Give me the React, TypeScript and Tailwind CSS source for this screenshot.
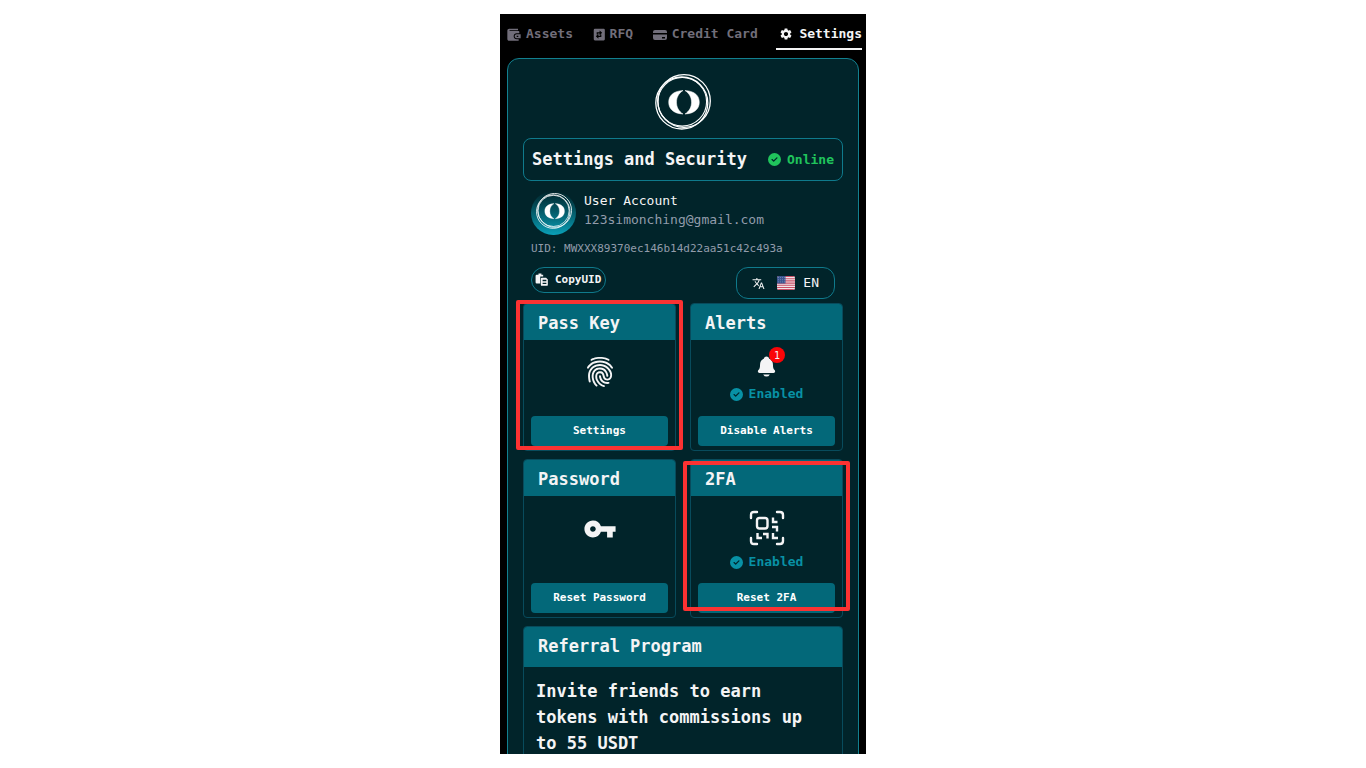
import type { ReactNode } from "react";
import { FaCircleCheck } from "react-icons/fa6";
import { IoFingerPrint, IoNotifications } from "react-icons/io5";
import { MdSettings, MdVpnKey, MdTranslate } from "react-icons/md";

function Rings({ className }: { className: string }) {
  return (
    <svg viewBox="0 0 56 56" className={className} fill="none" stroke="currentColor" aria-hidden="true">
      <circle cx="29" cy="27" r="26.300" strokeWidth="1.300" />
      <circle cx="26.800" cy="29" r="26" strokeWidth="1.300" />
      <circle cx="27.300" cy="27.800" r="24.300" strokeWidth="1.100" />
      <path d="M28 16.500C18 17 13.700 22 13.700 28.200C13.700 34.500 18 39.500 28 40C23.500 37 21.500 33 21.500 28.200C21.500 23.500 23.500 19.500 28 16.500Z" fill="currentColor" strokeWidth=".5" />
      <path d="M30 16.500C40 17 44.300 22 44.300 28.200C44.300 34.500 40 39.500 30 40C34.500 37 36.500 33 36.500 28.200C36.500 23.500 34.500 19.500 30 16.500Z" fill="currentColor" strokeWidth=".5" />
    </svg>
  );
}

function WalletIcon() {
  return (
    <svg viewBox="0 0 24 24" className="size-4" fill="currentColor" aria-hidden="true">
      <path d="M5 4H18V6.500H6C5 6.500 5 7.500 6 7.500H19Q20 7.500 20 9V11H16C13.500 11 11.500 12.500 11.500 15.500C11.500 18.500 13.500 20 16 20H19V22H5C3 22 2 21 2 19V7C2 5 3 4 5 4Z" />
      <path fillRule="evenodd" d="M16 12.500H22V18.500H16C14.500 18.500 13 17.200 13 15.500C13 13.800 14.500 12.500 16 12.500ZM16 14.500V16.500H18.500V14.500Z" />
    </svg>
  );
}

function SwapIcon() {
  return (
    <svg viewBox="0 0 24 24" className="size-[14px]" fill="currentColor" aria-hidden="true">
      <path fillRule="evenodd" d="M5 3H20Q22 3 22 5V21Q22 23 20 23H5Q3 23 3 21V5Q3 3 5 3ZM13 6V9H8V13H10V11H13V14L17.500 10ZM11 12L6.500 16L11 20V17H16V13H14V15H11Z" />
    </svg>
  );
}

function CreditCardIcon() {
  return (
    <svg viewBox="0 0 16 16" className="size-4" fill="currentColor" aria-hidden="true">
      <path d="M3 4H13Q15 4 15 6V7H1V6Q1 4 3 4Z" />
      <path fillRule="evenodd" d="M1 8.500H15V12Q15 14 13 14H3Q1 14 1 12ZM10 11V12.500H13V11Z" />
    </svg>
  );
}

function CopyIcon() {
  return (
    <svg viewBox="0 0 24 24" className="size-[14px]" fill="currentColor" aria-hidden="true">
      <path d="M3 3H6V1H11V3H14V6H9V18H3Q1 18 1 16V5Q1 3 3 3Z" />
      <path fillRule="evenodd" d="M12 8H19L22 11V20Q22 22 20 22H12Q10 22 10 20V10Q10 8 12 8ZM13 11.500V14H19.500V11.500ZM13 16.500V19H19.500V16.500Z" />
    </svg>
  );
}

function QrIcon() {
  return (
    <svg viewBox="0 0 36 36" className="size-9" fill="none" stroke="currentColor" strokeWidth="2.400" strokeLinecap="round" strokeLinejoin="round" aria-hidden="true">
      <path d="M2 8V5Q2 2 5 2H8M28 2H31Q34 2 34 5V8M34 28V31Q34 34 31 34H28M8 34H5Q2 34 2 31V28" />
      <rect x="8" y="8" width="10.500" height="10.500" rx="2.500" />
      <path strokeLinecap="butt" strokeLinejoin="miter" d="M24 7.500V12H28.500M23 17H28V21.500M8.500 23V28H13M14 24H18.500V28.500M24 23V28H29" />
    </svg>
  );
}

function UsFlag() {
  return (
    <svg viewBox="0 0 18 14" className="h-[14px] w-[18px] rounded-xs" aria-hidden="true">
      <rect width="18" height="14" fill="#f1e3e7" />
      <path d="M0 .5H18M0 2.700H18M0 4.900H18M0 7.100H18M0 9.300H18M0 11.500H18M0 13.600H18" stroke="#c95068" strokeWidth="1.100" />
      <rect width="8.500" height="7.500" fill="#3a5590" />
      <path d="M1 1.500H8M1 3.700H8M1 5.900H8" stroke="#a5b4d3" strokeWidth=".6" strokeDasharray=".8 1.200" />
    </svg>
  );
}

function NavItem({ icon, label, active }: { icon: ReactNode; label: string; active?: boolean }) {
  return (
    <a
      href="#"
      aria-current={active ? "page" : undefined}
      className={`flex h-9 items-center whitespace-nowrap border-b-2 pt-1.5 text-[13px] font-bold ${
        active ? "gap-1.5 border-zinc-100 pl-[3px] text-zinc-100" : "gap-1 border-transparent text-[#716e7a]"
      }`}
    >
      {icon}
      {label}
    </a>
  );
}

function Enabled() {
  return (
    <p className="flex items-center gap-1.5 text-[13px] leading-4 font-bold text-[#0891a5]">
      <FaCircleCheck className="size-[13px]" />
      Enabled
    </p>
  );
}

function Card({ title, action, marked, children }: { title: string; action: string; marked?: "top" | "bottom"; children: ReactNode }) {
  return (
    <section className="relative flex flex-col">
      <div className="flex flex-1 flex-col overflow-hidden rounded border border-[#084b5c]">
        <h2 className="bg-[#036879] px-[14px] pt-1.5 pb-1 text-[17px] leading-[26px] font-bold">{title}</h2>
        <div className="flex flex-1 flex-col px-[7px] pb-1">
          <div className="flex flex-1 flex-col items-center">{children}</div>
          <button className="h-[30px] rounded bg-[#036879] text-[11px] font-bold text-white">{action}</button>
        </div>
      </div>
      {marked && (
        <div
          className={`pointer-events-none absolute -inset-x-[7px] rounded-xs border-4 border-[#fc3232] ${
            marked === "top" ? "-top-[3px] bottom-px" : "top-0.5 bottom-[7px]"
          }`}
        />
      )}
    </section>
  );
}

export default function App() {
  return (
    <div className="flex h-screen items-center justify-center bg-white py-[14px] font-['DejaVu_Sans_Mono','Liberation_Mono',monospace] text-zinc-100">
      <main className="h-full w-full max-w-[366px] overflow-hidden bg-black">
        <nav className="flex justify-between pr-1 pl-1.5">
          <NavItem icon={<WalletIcon />} label="Assets" />
          <NavItem icon={<SwapIcon />} label="RFQ" />
          <NavItem icon={<CreditCardIcon />} label="Credit Card" />
          <NavItem icon={<MdSettings className="size-[14px]" />} label="Settings" active />
        </nav>

        <div className="mx-[7px] mt-2 rounded-xl border border-[#12808f] bg-[#01242a] px-[15px] pt-[15px] pb-6">
          <Rings className="mx-auto size-14 text-white" />

          <header className="mt-2 flex h-[43px] items-center justify-between rounded-lg border border-[#0f7a8c] px-2">
            <h1 className="text-[17px] font-bold">Settings and Security</h1>
            <p className="flex items-center gap-1.5 text-[13px] font-bold text-[#20c45c]">
              <FaCircleCheck className="size-[13px]" />
              Online
            </p>
          </header>

          <div className="mt-[10px] px-2">
            <div className="flex gap-2">
              <div className="flex h-11 w-[45px] items-center justify-center rounded-full bg-linear-to-b from-[#01242a] to-[#0aa0b8]">
                <Rings className="mb-1 size-9 text-white" />
              </div>
              <div className="text-[13px] leading-[19px]">
                <p>User Account</p>
                <p className="text-[#929cab]">123simonching@gmail.com</p>
              </div>
            </div>
            <p className="mt-[6px] text-[11px] leading-4 text-[#929cab]">UID: MWXXX89370ec146b14d22aa51c42c493a</p>
            <div className="mt-[10px] flex items-start justify-between">
              <button className="flex h-[26px] items-center gap-1.5 rounded-full border border-[#0f7a8c] pr-1 pl-[3px] text-[11px] font-bold">
                <CopyIcon />
                CopyUID
              </button>
              <button className="flex h-8 items-center gap-2 rounded-xl border border-[#0f7a8c] px-[15px] text-[13px]">
                <MdTranslate className="mr-1 size-[13px]" />
                <UsFlag />
                EN
              </button>
            </div>
          </div>

          <div className="mt-1 grid grid-cols-2 gap-x-[14px] gap-y-2">
            <Card title="Pass Key" action="Settings" marked="top">
              <IoFingerPrint className="mt-4 size-8" />
            </Card>
            <Card title="Alerts" action="Disable Alerts">
              <div className="relative mt-[15px] mb-2">
                <IoNotifications className="size-[23px]" />
                <span className="absolute -top-2 left-[14px] flex size-4 items-center justify-center rounded-full bg-[#fa0508] text-[10px]">1</span>
              </div>
              <Enabled />
              <div className="h-[14px]" />
            </Card>
            <Card title="Password" action="Reset Password">
              <MdVpnKey className="mt-4 size-[34px]" />
            </Card>
            <Card title="2FA" action="Reset 2FA" marked="bottom">
              <div className="mt-[14px] mb-2">
                <QrIcon />
              </div>
              <Enabled />
              <div className="h-[13px]" />
            </Card>
          </div>

          <section className="mt-2 overflow-hidden rounded border border-[#084b5c]">
            <h2 className="bg-[#036879] px-[14px] pt-1.5 pb-2 text-[17px] leading-[26px] font-bold">Referral Program</h2>
            <p className="px-3 py-[11px] text-[17px] leading-[26px] font-bold">Invite friends to earn tokens with commissions up to 55 USDT</p>
          </section>
        </div>
      </main>
    </div>
  );
}
